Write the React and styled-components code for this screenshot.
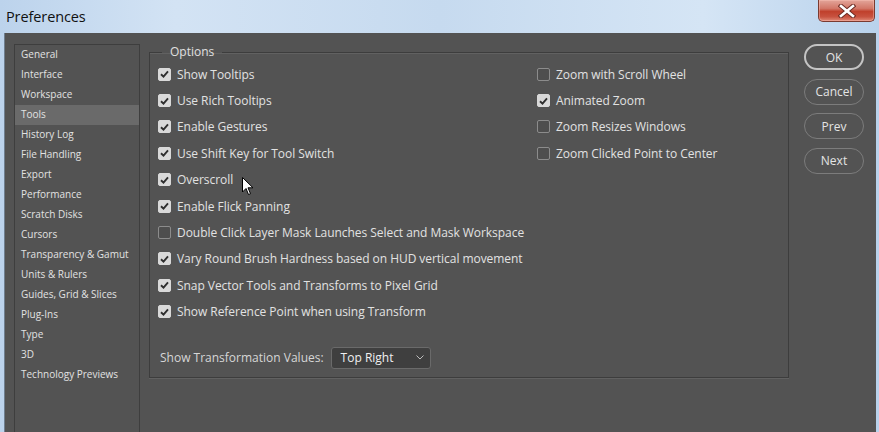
import React from "react";
import styled, { createGlobalStyle } from "styled-components";

const Global = createGlobalStyle`
  html, body { margin: 0; padding: 0; background: #c9dcf0; }
  body { font-family: "Open Sans", "Noto Sans", sans-serif; }
  * { box-sizing: border-box; }
`;

const Window = styled.div`
  width: 879px;
  height: 432px;
  display: flex;
  flex-direction: column;
  overflow: hidden;
  background: linear-gradient(90deg, #bcd3ec 0%, #d3e3f4 20%, #c6daef 50%, #d5e5f5 80%, #b9d2ec 100%);
  position: relative;
`;

const TitleBar = styled.div`
  height: 33px;
  flex: none;
  display: flex;
  align-items: flex-start;
  justify-content: space-between;
  padding: 0 4px 0 6px;
`;

const Title = styled.div`
  font-family: "Open Sans", "Noto Sans", sans-serif;
  font-size: 14.5px;
  color: #111;
  line-height: 33px;
  letter-spacing: -0.1px;
`;

const CloseButton = styled.div`
  width: 57px;
  height: 22px;
  border: 1px solid #7a3a30;
  border-top: none;
  border-radius: 0 0 5px 5px;
  background: linear-gradient(180deg, #e3a59a 0%, #d27768 40%, #c0402c 55%, #c85340 80%, #e08a78 100%);
  display: flex;
  align-items: center;
  justify-content: center;
  box-shadow: inset 0 0 0 1px rgba(255, 200, 190, 0.4);
`;

const Body = styled.div`
  flex: 1;
  margin: 0 3px 0 4px;
  border-left: 1px solid #6f7f90;
  background: #535353;
  display: flex;
  align-items: flex-start;
  padding: 11px 0 0 9px;
`;

const Sidebar = styled.div`
  width: 126px;
  height: 400px;
  flex: none;
  border: 1px solid #3e3e3e;
  border-bottom: none;
  display: flex;
  flex-direction: column;
`;

const NavItem = styled.div`
  height: 20px;
  line-height: 19px;
  padding-left: 6px;
  font-size: 10px;
  color: #e2e2e2;
  background: ${(p) => (p.$active ? "#6a6a6a" : "transparent")};
  white-space: nowrap;
`;

const Fieldset = styled.fieldset`
  margin: 0 0 0 9px;
  width: 640px;
  height: 334px;
  padding: 0 8px 0 8px;
  border: 1px solid #3d3d3d;
  box-shadow: 0 1px 0 #616161, inset 0 1px 0 #616161;
  min-width: 0;
  flex: none;
`;

const Legend = styled.legend`
  margin-left: 4px;
  padding: 0 8px;
  font-size: 12px;
  color: #e0e0e0;
  line-height: 16px;
`;

const Columns = styled.div`
  display: grid;
  grid-template-columns: 379px 1fr;
  margin-top: 1px;
`;

const Column = styled.div`
  display: flex;
  flex-direction: column;
`;

const Row = styled.label`
  height: 26.4px;
  display: flex;
  align-items: center;
  gap: 6px;
  font-size: 12px;
  color: #e2e2e2;
  white-space: nowrap;
  letter-spacing: -0.05px;
`;

const Box = styled.span`
  width: 13px;
  height: 13px;
  border-radius: 2px;
  flex: none;
  display: flex;
  align-items: center;
  justify-content: center;
  background: ${(p) => (p.$checked ? "#d9d9d9" : "#4e4e4e")};
  border: 1px solid ${(p) => (p.$checked ? "#d9d9d9" : "#8c8c8c")};
`;

const SelectRow = styled.div`
  display: flex;
  align-items: center;
  gap: 7px;
  margin-top: 22px;
  padding-left: 2px;
  font-size: 12px;
  color: #d6d6d6;
`;

const Select = styled.div`
  width: 100px;
  height: 22px;
  border: 1px solid #6a6a6a;
  border-radius: 3px;
  background: #3f3f3f;
  display: flex;
  align-items: center;
  justify-content: space-between;
  padding: 0 6px 0 9px;
  font-size: 12px;
  color: #f0f0f0;
`;

const Buttons = styled.div`
  margin-left: 15px;
  margin-top: 0px;
  display: flex;
  flex-direction: column;
  gap: 8.5px;
`;

const Button = styled.div`
  width: 60px;
  height: 26px;
  border-radius: 13px;
  border: ${(p) => (p.$primary ? "2px solid #c4c4c4" : "1px solid #7c7c7c")};
  display: flex;
  align-items: center;
  justify-content: center;
  font-size: 12px;
  color: #e4e4e4;
`;

const Cursor = styled.svg`
  position: absolute;
  left: 242px;
  top: 177px;
`;

const Check = () => (
  <svg width="9" height="8" viewBox="0 0 9 8">
    <path d="M1 4.2 L3.5 6.6 L8 1.4" fill="none" stroke="#2e2e2e" strokeWidth="1.9" />
  </svg>
);

const Option = ({ checked, children }) => (
  <Row>
    <Box $checked={checked}>{checked && <Check />}</Box>
    {children}
  </Row>
);

const nav = [
  "General",
  "Interface",
  "Workspace",
  "Tools",
  "History Log",
  "File Handling",
  "Export",
  "Performance",
  "Scratch Disks",
  "Cursors",
  "Transparency & Gamut",
  "Units & Rulers",
  "Guides, Grid & Slices",
  "Plug-Ins",
  "Type",
  "3D",
  "Technology Previews",
];

const left = [
  ["Show Tooltips", true],
  ["Use Rich Tooltips", true],
  ["Enable Gestures", true],
  ["Use Shift Key for Tool Switch", true],
  ["Overscroll", true],
  ["Enable Flick Panning", true],
  ["Double Click Layer Mask Launches Select and Mask Workspace", false],
  ["Vary Round Brush Hardness based on HUD vertical movement", true],
  ["Snap Vector Tools and Transforms to Pixel Grid", true],
  ["Show Reference Point when using Transform", true],
];

const right = [
  ["Zoom with Scroll Wheel", false],
  ["Animated Zoom", true],
  ["Zoom Resizes Windows", false],
  ["Zoom Clicked Point to Center", false],
];

export default function App() {
  return (
    <>
      <Global />
      <Window>
        <TitleBar>
          <Title>Preferences</Title>
          <CloseButton>
            <svg width="18" height="14" viewBox="0 0 18 14">
              <path
                d="M3 2 L15 12 M15 2 L3 12"
                stroke="#6b2a22"
                strokeWidth="4.5"
                strokeLinecap="square"
              />
              <path
                d="M3 2 L15 12 M15 2 L3 12"
                stroke="#ffffff"
                strokeWidth="2.6"
                strokeLinecap="square"
              />
            </svg>
          </CloseButton>
        </TitleBar>
        <Body>
          <Sidebar>
            {nav.map((n) => (
              <NavItem key={n} $active={n === "Tools"}>
                {n}
              </NavItem>
            ))}
          </Sidebar>
          <Fieldset>
            <Legend>Options</Legend>
            <Columns>
              <Column>
                {left.map(([t, c]) => (
                  <Option key={t} checked={c}>
                    {t}
                  </Option>
                ))}
              </Column>
              <Column>
                {right.map(([t, c]) => (
                  <Option key={t} checked={c}>
                    {t}
                  </Option>
                ))}
              </Column>
            </Columns>
            <SelectRow>
              Show Transformation Values:
              <Select>
                Top Right
                <svg width="8" height="5" viewBox="0 0 8 5">
                  <path d="M0.5 0.5 L4 4 L7.5 0.5" fill="none" stroke="#bdbdbd" strokeWidth="1" />
                </svg>
              </Select>
            </SelectRow>
          </Fieldset>
          <Buttons>
            <Button $primary>OK</Button>
            <Button>Cancel</Button>
            <Button>Prev</Button>
            <Button>Next</Button>
          </Buttons>
        </Body>
        <Cursor width="12" height="19" viewBox="0 0 12 19">
          <path
            d="M0.5 0.5 L0.5 15 L4 11.5 L6.5 17.5 L8.5 16.7 L6 10.8 L11 10.8 Z"
            fill="#ffffff"
            stroke="#000"
            strokeWidth="1"
          />
        </Cursor>
      </Window>
    </>
  );
}
